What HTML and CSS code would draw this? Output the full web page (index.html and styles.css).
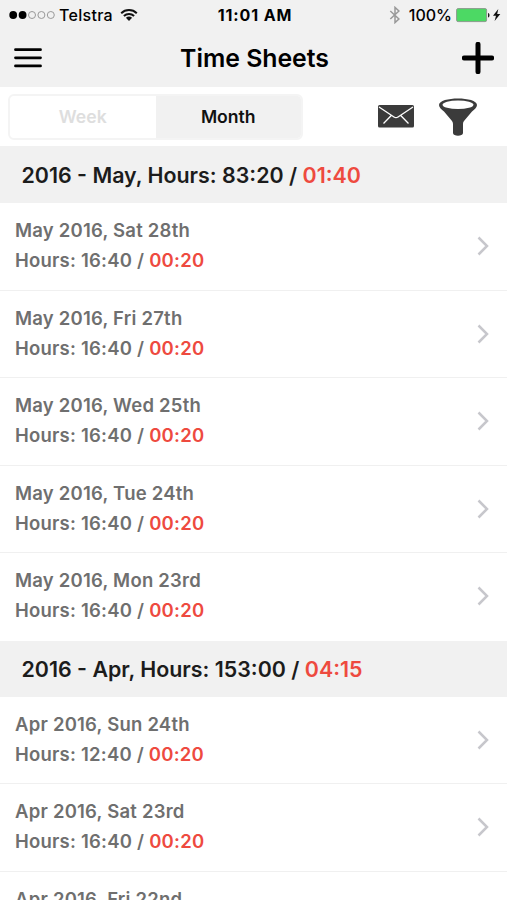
FILE: index.html
```html
<!DOCTYPE html>
<html lang="en">
<head>
    <meta charset="UTF-8">
    <meta name="viewport" content="width=device-width, initial-scale=1.0">
    <title>Time Sheets</title>
    <link rel="stylesheet" href="styles.css">
</head>
<body>
    <header>
        <div class="status-bar">
            <div class="status-left">
                <svg class="signal" width="46" height="10" viewBox="0 0 46 10">
                    <circle cx="4.2" cy="5" r="3.9"/>
                    <circle cx="13.6" cy="5" r="3.9"/>
                    <circle class="empty" cx="23" cy="5" r="3.5"/>
                    <circle class="empty" cx="32.4" cy="5" r="3.5"/>
                    <circle class="empty" cx="41.8" cy="5" r="3.5"/>
                </svg>
                <span class="carrier">Telstra</span>
                <svg class="wifi" width="18" height="14" viewBox="0 0 18 14">
                    <path d="M1.2 5.2a11.2 11.2 0 0 1 15.6 0M3.9 8a7.4 7.4 0 0 1 10.2 0" fill="none" stroke="#111" stroke-width="2"/>
                    <path d="M9 13L5.9 9.8a4.6 4.6 0 0 1 6.2 0z" fill="#111"/>
                </svg>
            </div>
            <span class="clock">11:01 AM</span>
            <div class="status-right">
                <svg class="bluetooth" width="12" height="18" viewBox="0 0 12 18">
                    <path d="M1.3 5l8.6 8L6 16.6V1.4L9.9 5l-8.6 8" fill="none" stroke="#999" stroke-width="1.5"/>
                </svg>
                <span class="percent">100%</span>
                <svg class="battery" width="45" height="16" viewBox="0 0 45 16">
                    <rect x=".6" y="1.6" width="30" height="13" rx="1.5" fill="#4cd964" stroke="#8c9b8e"/>
                    <path d="M32 6c2 .3 2 4.3 0 4.6z" fill="#222"/>
                    <path d="M42.3 2l-5.3 6.8h3L38.6 14l5.7-7h-3.1z" fill="#111"/>
                </svg>
            </div>
        </div>
        <div class="nav-bar">
            <svg class="menu" width="28" height="20" viewBox="0 0 28 20">
                <path d="M1.5 1.7h25M1.5 9.8h25M1.5 17.9h25" stroke="#000" stroke-width="2.8" stroke-linecap="round"/>
            </svg>
            <h1>Time Sheets</h1>
            <svg class="add" width="32" height="32" viewBox="0 0 32 32">
                <path d="M16 2.3v27.4M2.3 16h27.4" stroke="#000" stroke-width="5" stroke-linecap="round"/>
            </svg>
        </div>
    </header>

    <div class="toolbar">
        <div class="tabs">
            <span class="tab">Week</span>
            <span class="tab active">Month</span>
        </div>
        <svg class="mail" width="36" height="23" viewBox="0 0 36 23">
            <rect width="36" height="22.5" rx="1.5" fill="#3b3b3b"/>
            <path d="M1 2l15 10q2 1.3 4 0L35 2M13.5 10.3L5.5 18.5M22.5 10.3l8 8.2" fill="none" stroke="#fff" stroke-width="1.3"/>
        </svg>
        <svg class="filter" width="38" height="38" viewBox="0 0 38 38">
            <path d="M0 7C0-1.6 38-1.6 38 7c0 2.5-2.6 4.4-5 6.6l-8 9.3q-1 1.2-1 3V35c0 3.5-10 3.5-10 0v-9q0-1.9-1-3.1l-8-9.3C2.6 11.4 0 9.5 0 7z" fill="#3b3b3b"/>
            <ellipse cx="19" cy="6.7" rx="15.5" ry="4.3" fill="#fff"/>
        </svg>
    </div>

    <main>
        <h2>2016 - May, Hours: 83:20 / <span class="red">01:40</span></h2>
        <ul>
            <li>
                <p>May 2016, Sat 28th<br>Hours: 16:40 / <span class="red">00:20</span></p>
                <svg class="arrow" viewBox="0 0 12 20"><path d="M1.5 1.5L10 10l-8.5 8.5"/></svg>
            </li>
            <li>
                <p>May 2016, Fri 27th<br>Hours: 16:40 / <span class="red">00:20</span></p>
                <svg class="arrow" viewBox="0 0 12 20"><path d="M1.5 1.5L10 10l-8.5 8.5"/></svg>
            </li>
            <li>
                <p>May 2016, Wed 25th<br>Hours: 16:40 / <span class="red">00:20</span></p>
                <svg class="arrow" viewBox="0 0 12 20"><path d="M1.5 1.5L10 10l-8.5 8.5"/></svg>
            </li>
            <li>
                <p>May 2016, Tue 24th<br>Hours: 16:40 / <span class="red">00:20</span></p>
                <svg class="arrow" viewBox="0 0 12 20"><path d="M1.5 1.5L10 10l-8.5 8.5"/></svg>
            </li>
            <li>
                <p>May 2016, Mon 23rd<br>Hours: 16:40 / <span class="red">00:20</span></p>
                <svg class="arrow" viewBox="0 0 12 20"><path d="M1.5 1.5L10 10l-8.5 8.5"/></svg>
            </li>
        </ul>

        <h2>2016 - Apr, Hours: 153:00 / <span class="red">04:15</span></h2>
        <ul>
            <li>
                <p>Apr 2016, Sun 24th<br>Hours: 12:40 / <span class="red">00:20</span></p>
                <svg class="arrow" viewBox="0 0 12 20"><path d="M1.5 1.5L10 10l-8.5 8.5"/></svg>
            </li>
            <li>
                <p>Apr 2016, Sat 23rd<br>Hours: 16:40 / <span class="red">00:20</span></p>
                <svg class="arrow" viewBox="0 0 12 20"><path d="M1.5 1.5L10 10l-8.5 8.5"/></svg>
            </li>
            <li>
                <p>Apr 2016, Fri 22nd</p>
            </li>
        </ul>
    </main>
</body>
</html>
```
FILE: styles.css
```css
* {
    margin: 0;
    padding: 0;
    box-sizing: border-box;
}

body {
    height: 900px;
    overflow: hidden;
    background-color: #fff;
    color: #000;
    font-family: Inter, "Liberation Sans", sans-serif;
}

svg {
    display: block;
    flex: none;
}

header {
    height: 87px;
    background-color: #f1f1f1;
}

.status-bar {
    display: grid;
    grid-template-columns: 1fr auto 1fr;
    align-items: center;
    height: 29px;
    padding: 0 6px 0 9px;
    font-size: 16px;
    font-weight: 500;
}

.status-left,
.status-right {
    display: flex;
    align-items: center;
}

.status-right {
    justify-content: flex-end;
}

.signal .empty {
    fill: none;
    stroke: #999;
}

.carrier {
    margin: 1px 7px 0 4px;
    letter-spacing: 0.3px;
}

.clock {
    padding-top: 1px;
    font-weight: 700;
    letter-spacing: 0.9px;
}

.bluetooth {
    margin-right: 8px;
}

.percent {
    margin: 1px 4px 0 0;
}

.nav-bar {
    display: flex;
    justify-content: space-between;
    align-items: center;
    height: 58px;
    padding: 0 14px;
}

.add {
    margin-right: -1px;
}

h1 {
    padding-left: 5px;
    font-size: 24.8px;
    font-weight: 600;
}

.toolbar {
    display: flex;
    align-items: center;
    height: 59px;
    padding: 0 30px 0 8px;
}

.tabs {
    display: flex;
    width: 295px;
    height: 46px;
    margin-right: auto;
    border: 2px solid #f4f4f4;
    border-radius: 6px;
    overflow: hidden;
}

.tab {
    flex: 1;
    line-height: 42px;
    text-align: center;
    font-size: 17.6px;
    font-weight: 600;
    color: #dedede;
}

.tab.active {
    background-color: #f1f1f1;
    color: #111;
}

.mail {
    margin-right: 25px;
}

h2 {
    height: 57px;
    padding-left: 21.5px;
    background-color: #f1f1f1;
    line-height: 58px;
    font-size: 21.4px;
    font-weight: 600;
    color: #1c1c1c;
}

ul + h2 {
    height: 56px;
    line-height: 57px;
}

ul {
    list-style: none;
}

li {
    display: flex;
    justify-content: space-between;
    height: 87.5px;
    padding: 12px 18px 0 15px;
    border-bottom: 1px solid #f0f0f0;
}

li:last-child {
    border-bottom: none;
}

li p {
    line-height: 30px;
    font-size: 18.5px;
    font-weight: 600;
    letter-spacing: 0.22px;
    color: #6f6f6f;
}

.red {
    color: #ee4a3f;
}

.arrow {
    width: 12px;
    height: 20px;
    margin-top: 21px;
    fill: none;
    stroke: #c7c7cc;
    stroke-width: 2.5;
}
```
